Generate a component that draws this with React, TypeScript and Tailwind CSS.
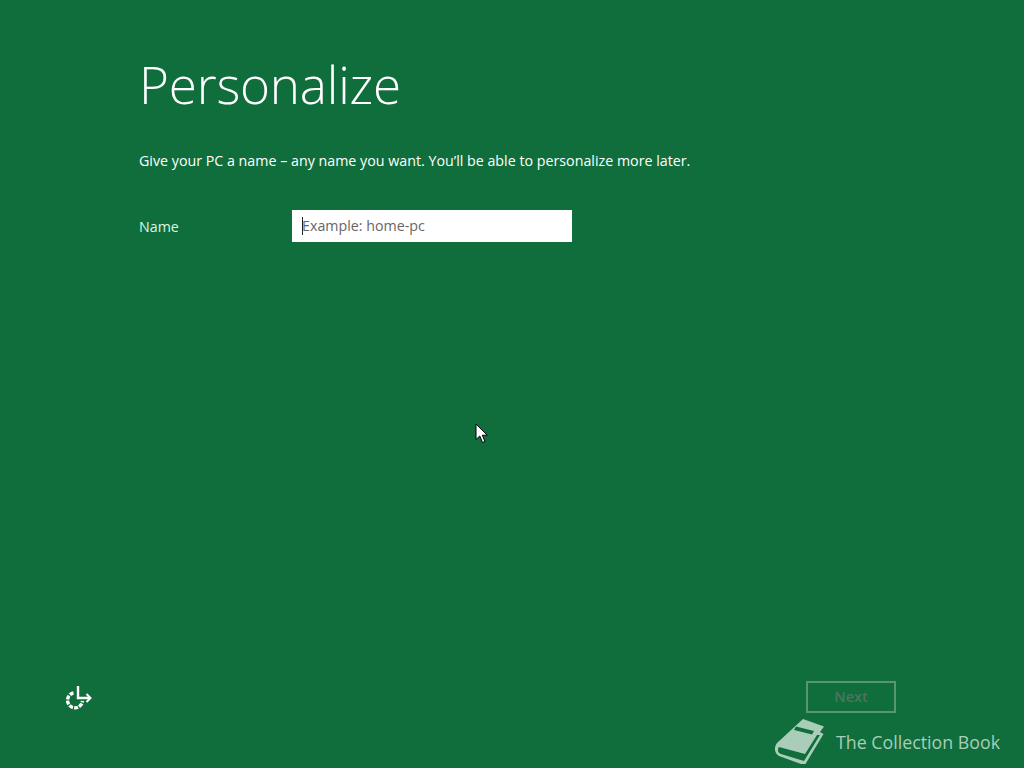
const FONT = "font-['Open_Sans','Noto_Sans',sans-serif]";

function EaseOfAccessIcon() {
  return (
    <svg width="28" height="26" viewBox="0 0 28 26" fill="none" stroke="#fff" strokeLinecap="butt">
      <path d="M8.500 9A7.500 7.500 0 1 0 17.500 17" strokeWidth="3.400" strokeDasharray="4 1.200" />
      <path d="M13 2v12h11" strokeWidth="2.400" />
      <path d="M21.500 10l4 4-4 4" strokeWidth="2" />
    </svg>
  );
}

function BookIcon() {
  return (
    <svg width="52" height="48" viewBox="0 0 52 48">
      <path d="M30 1L51 8.500 47 14 50.500 16 32.500 46 28 46 6 38C1 35 1 29 4 25Z" fill="#a9cdb9" />
      <path d="M6 29C4 32 5 35 8 36L31 43 47 17 44 17 32 36Z" fill="#0f6e3c" />
      <path d="M23 8.500L41 13 39 16.500 21 12Z" fill="#0f6e3c" />
    </svg>
  );
}

function Cursor() {
  return (
    <svg width="13" height="21" viewBox="0 0 13 21" className="absolute left-[475px] top-[423px]">
      <path d="M1 1v15.500l3.800-3.500 2.700 6.500 2.500-1-2.700-6.300h5Z" fill="#fff" stroke="#000" strokeWidth="1" />
    </svg>
  );
}

export default function App() {
  return (
    <div className={`relative flex h-[768px] w-[1024px] flex-col overflow-hidden bg-[#0f6e3c] text-white ${FONT}`}>
      <main className="flex-1 pl-[139px] pt-[49px]">
        <h1 className="text-[51.2px] font-light leading-[70px] tracking-[-0.2px]">Personalize</h1>
        <p className="mt-[32px] text-[14.25px] leading-[20px]">
          Give your PC a name – any name you want. You’ll be able to personalize more later.
        </p>
        <div className="mt-[39px] flex items-center">
          <label className="w-[153px] pt-px text-[14.25px] text-[#d9f5e4]">Name</label>
          <div className="flex h-[32px] w-[280px] items-center bg-white pl-[10px]">
            <span className="h-[18px] w-px bg-[#222]" />
            <span className="-ml-px text-[14.25px] text-[#666666]">Example: home-pc</span>
          </div>
        </div>
      </main>

      <footer className="flex items-center justify-between pb-[55px] pl-[65px] pr-[128px]">
        <EaseOfAccessIcon />
        <button className="flex h-[32px] w-[90px] items-center justify-center border-2 border-[#57976f] text-[14.5px] font-semibold text-[#4f7360]">
          Next
        </button>
      </footer>

      <div className="absolute bottom-[2px] right-[24px] flex items-center gap-[11px]">
        <BookIcon />
        <span className="text-[17.8px] text-[#a9cdb9]">The Collection Book</span>
      </div>

      <Cursor />
    </div>
  );
}
